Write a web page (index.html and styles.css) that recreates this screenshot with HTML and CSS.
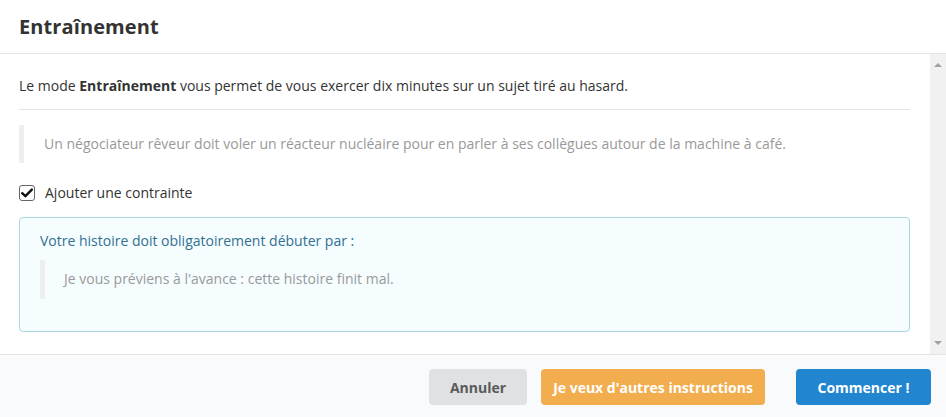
FILE: index.html
```html
<!DOCTYPE html>
<html lang="fr">
<head>
  <meta charset="UTF-8">
  <meta name="viewport" content="width=device-width, initial-scale=1.0">
  <title>Entraînement</title>
  <link rel="stylesheet" href="styles.css">
</head>
<body>
  <div class="modal">
    <div class="modal-header">
      <h1>Entraînement</h1>
    </div>

    <div class="modal-body">
      <div class="content">
        <p class="intro">Le mode <b>Entraînement</b> vous permet de vous exercer dix minutes sur un sujet tiré au hasard.</p>
        <hr>
        <blockquote>Un négociateur rêveur doit voler un réacteur nucléaire pour en parler à ses collègues autour de la machine à café.</blockquote>

        <label class="check">
          <span class="box">
            <svg width="12" height="10" viewBox="0 0 12 10"><path d="M1.2 5.2 L4.4 8.2 L10.8 1.6" fill="none" stroke="#111" stroke-width="2.4" stroke-linecap="round" stroke-linejoin="round"/></svg>
          </span>
          Ajouter une contrainte
        </label>

        <div class="info">
          <div class="info-title">Votre histoire doit obligatoirement débuter par :</div>
          <blockquote>Je vous préviens à l'avance : cette histoire finit mal.</blockquote>
        </div>
      </div>
      <div class="scrollbar">
        <span class="arrow up"></span>
        <span class="arrow down"></span>
      </div>
    </div>

    <div class="modal-footer">
      <button class="btn btn-grey">Annuler</button>
      <button class="btn btn-orange">Je veux d'autres instructions</button>
      <button class="btn btn-blue">Commencer !</button>
    </div>
  </div>
</body>
</html>
```

FILE: styles.css
```css
body { margin: 0; font-family: "Open Sans", "Noto Sans", sans-serif; font-size: 14px; color: #333; background: #fff; }
.modal { width: 946px; height: 417px; overflow: hidden; }

.modal-header { height: 53px; border-bottom: 1px solid #e5e5e5; padding: 0 19px; display: flex; align-items: center; }
.modal-header h1 { margin: 0; font-size: 20px; font-weight: 700; color: #333; letter-spacing: 0.1px; }

.modal-body { height: 300px; display: flex; }
.content { flex: 1; padding: 22px 20px 0 19px; overflow: hidden; }
.intro { margin: 0; line-height: 20px; }
.intro b { font-weight: 700; }
hr { border: 0; border-top: 1px solid #e3e3e3; margin: 13px 0 15px; }

blockquote { margin: 0; border-left: 5px solid #eee; padding: 9px 20px; line-height: 20px; color: #999; }

.check { display: flex; align-items: center; margin-top: 20px; line-height: 20px; color: #333; }
.box { width: 14px; height: 14px; border: 1px solid #666; border-radius: 3px; margin-right: 10px; display: flex; align-items: center; justify-content: center; }

.info { margin-top: 14px; border: 1px solid #a9d8e3; border-radius: 4px; background: #f5fdff; padding: 13px 20px 32px; }
.info-title { color: #31708f; line-height: 20px; margin-bottom: 9px; }
.info blockquote { padding: 9px 18px 10px 19px; }

.scrollbar { width: 16px; background: #f1f1f1; position: relative; }
.arrow { position: absolute; left: 4px; width: 0; height: 0; border-left: 4px solid transparent; border-right: 4px solid transparent; }
.arrow.up { top: 9px; border-bottom: 4px solid #a3a3a3; }
.arrow.down { bottom: 9px; border-top: 4px solid #a3a3a3; }

.modal-footer { border-top: 1px solid #e5e5e5; background: #f9fafb; padding: 14px 15px 15px; display: flex; justify-content: flex-end; }
.btn { height: 36px; border: 0; border-radius: 4px; font-family: inherit; font-size: 14px; font-weight: 700; padding: 0; white-space: nowrap; color: #fff; }
.btn-grey { background: #e0e1e2; color: #5a5a5a; width: 98px; }
.btn-orange { background: #f2ad4e; width: 224px; margin-left: 14px; }
.btn-blue { background: #2185d0; width: 135px; margin-left: 31px; }
```
